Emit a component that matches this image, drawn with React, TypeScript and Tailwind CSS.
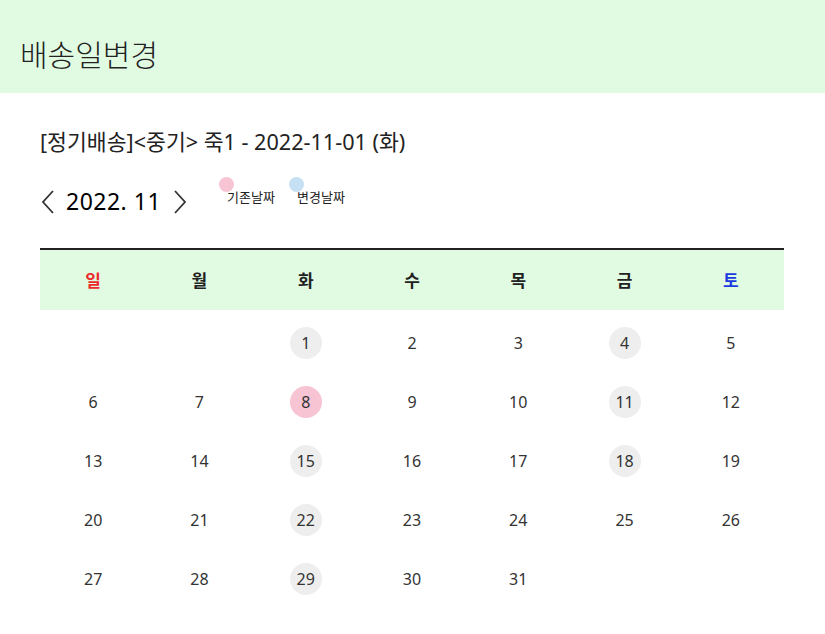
const weeks: (number | null)[][] = [
  [null, null, 1, 2, 3, 4, 5],
  [6, 7, 8, 9, 10, 11, 12],
  [13, 14, 15, 16, 17, 18, 19],
  [20, 21, 22, 23, 24, 25, 26],
  [27, 28, 29, 30, 31, null, null],
];

const deliveryDays = [1, 4, 11, 15, 18, 22, 29];
const originalDay = 8;

const days = ["일", "월", "화", "수", "목", "금", "토"];

export default function App() {
  return (
    <div className="min-h-screen bg-white text-[#222] font-['Noto_Sans','Noto_Sans_CJK_KR',sans-serif]">
      {/* Header */}
      <header className="h-[93px] bg-[#e1fbe3] flex items-center px-5 pt-[16px]">
        <h1 className="text-[30px] font-light text-[#222]">배송일변경</h1>
      </header>

      <div className="px-10 pt-[33px]">
        <p className="text-[21.6px] text-[#222]">[정기배송]&lt;중기&gt; 죽1 - 2022-11-01 (화)</p>

        {/* Month nav + legend */}
        <div className="flex items-start mt-[20px] h-[38px]">
          <div className="flex items-center mt-[6px]">
            <svg width="16" height="26" viewBox="0 0 16 26" className="text-[#333]">
              <path d="M13 2 L3 13 L13 24" fill="none" stroke="currentColor" strokeWidth="1.8" />
            </svg>
            <span className="ml-[10px] text-[23px] text-black tracking-[0.5px]">2022. 11</span>
            <svg width="16" height="26" viewBox="0 0 16 26" className="ml-[11px] text-[#333]">
              <path d="M3 2 L13 13 L3 24" fill="none" stroke="currentColor" strokeWidth="1.8" />
            </svg>
          </div>
          <div className="flex ml-[31px]">
            <div className="relative w-[70px]">
              <span className="absolute left-0 top-[-1px] w-[15px] h-[15px] rounded-full bg-[#f7c4d3]" />
              <span className="absolute left-[8px] top-[10px] text-[13px] text-[#222] whitespace-nowrap">기존날짜</span>
            </div>
            <div className="relative w-[70px]">
              <span className="absolute left-0 top-[-1px] w-[15px] h-[15px] rounded-full bg-[#c6e0f3]" />
              <span className="absolute left-[8px] top-[10px] text-[13px] text-[#222] whitespace-nowrap">변경날짜</span>
            </div>
          </div>
        </div>

        {/* Calendar */}
        <table className="w-[744px] mt-[32px] border-t-2 border-[#222] table-fixed border-collapse">
          <thead>
            <tr className="bg-[#e1fbe3] h-[61px]">
              {days.map((d, i) => (
                <th
                  key={d}
                  className={
                    "text-[17px] font-bold " +
                    (i === 0 ? "text-[#ee2a2a]" : i === 6 ? "text-[#1b3be0]" : "text-[#222]")
                  }
                >
                  {d}
                </th>
              ))}
            </tr>
          </thead>
          <tbody>
            <tr className="h-[3px]">
              <td colSpan={7} />
            </tr>
            {weeks.map((w, ri) => (
              <tr key={ri} className="h-[59px]">
                {w.map((n, ci) => (
                  <td key={ci} className="text-center align-middle">
                    {n !== null && (
                      <span
                        className={
                          "inline-flex items-center justify-center w-[32px] h-[32px] rounded-full text-[16px] text-[#333] " +
                          (n === originalDay
                            ? "bg-[#f7c4d3]"
                            : deliveryDays.includes(n)
                            ? "bg-[#eeeeee]"
                            : "")
                        }
                      >
                        {n}
                      </span>
                    )}
                  </td>
                ))}
              </tr>
            ))}
          </tbody>
        </table>
      </div>
    </div>
  );
}
